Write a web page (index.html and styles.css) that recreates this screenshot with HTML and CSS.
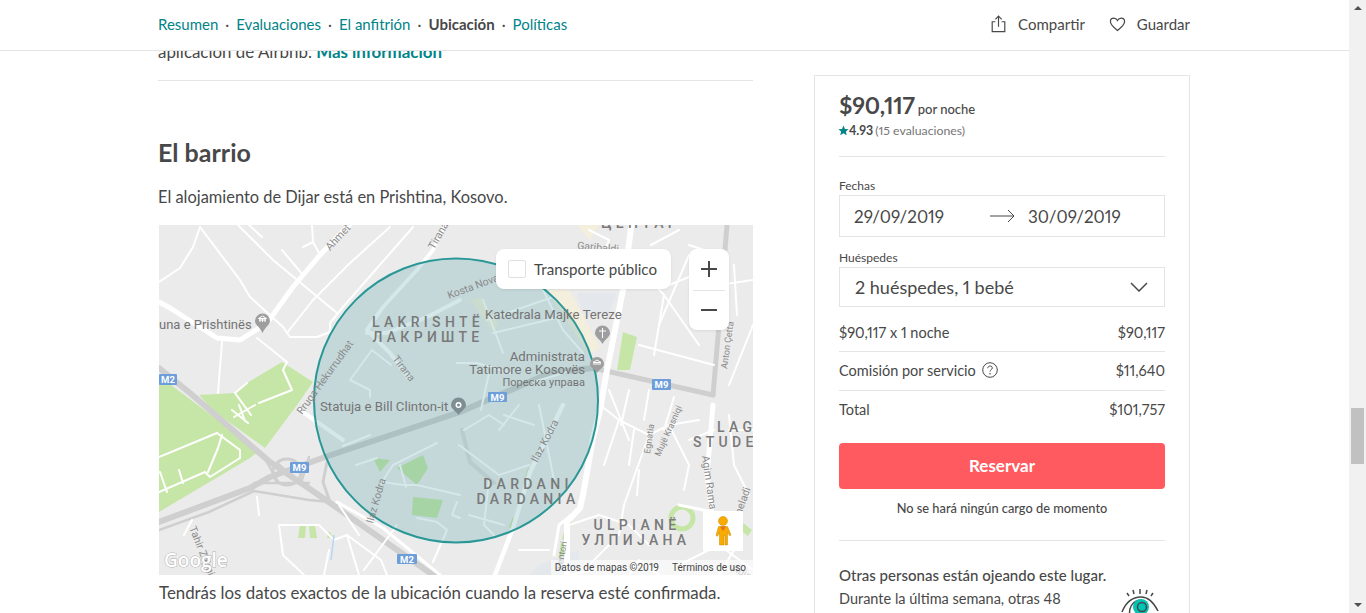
FILE: index.html
```html
<!DOCTYPE html>
<html lang="es">
<head>
    <meta charset="UTF-8">
    <meta name="viewport" content="width=device-width, initial-scale=1.0">
    <title>Alojamiento en Prishtina</title>
    <link rel="stylesheet" href="styles.css">
</head>
<body>
    <div class="window">
        <div class="page">
            <!-- Sticky section nav -->
            <header class="topnav">
                <nav class="section-links">
                    <a class="link" href="#">Resumen</a><span class="dot">·</span>
                    <a class="link" href="#">Evaluaciones</a><span class="dot">·</span>
                    <a class="link" href="#">El anfitrión</a><span class="dot">·</span>
                    <a class="link link-active" href="#">Ubicación</a><span class="dot">·</span>
                    <a class="link" href="#">Políticas</a>
                </nav>
                <div class="actions">
                    <span class="action">
                        <svg class="action-icon" viewBox="0 0 18 20"><path d="M5.500 7.500H2v11h14v-11h-3.500M9 13V1.500M5.500 4.800 9 1.300l3.500 3.500" fill="none" stroke="#484848" stroke-width="1.300"/></svg>
                        Compartir
                    </span>
                    <span class="action">
                        <svg class="action-icon" viewBox="0 0 18 18"><path d="M9 15.800C5 12.700 1.500 10 1.500 6.400c0-2.200 1.700-3.700 3.600-3.700 1.600 0 3 .9 3.900 2.600.9-1.700 2.300-2.600 3.900-2.600 1.900 0 3.600 1.500 3.600 3.700 0 3.600-3.500 6.300-7.500 9.400z" fill="none" stroke="#484848" stroke-width="1.300"/></svg>
                        Guardar
                    </span>
                </div>
            </header>

            <div class="columns">
                <main class="content">
                    <p class="clipped-text">aplicación de Airbnb. <a class="more" href="#">Más información</a></p>
                    <hr class="divider">
                    <h2 class="section-title">El barrio</h2>
                    <p class="body-text">El alojamiento de Dijar está en Prishtina, Kosovo.</p>

                    <div class="map">
                        <svg class="map-art" viewBox="0 0 594 350">
                            <rect width="594" height="350" fill="#ebebeb"/>
                            <!-- parks -->
                            <g fill="#c6e6a8">
                                <path d="M0 160 0 287 91 233 100 226 0 151z"/>
                                <path d="M40 170 76 168 88 158 123 137 154 157 138 180 106 223 56 187z"/>
                                <path d="M254 272 284 275 278 293 253 290z"/>
                                <path d="M238 243 264 230 269 243 258 260z"/>
                                <path d="M214 233 231 235 221 247z"/>
                                <path d="M464 107 478 112 471 145 458 145z"/>
                                <path d="M141 300 147 300 146 313 139 313zM150 300 156 300 158 313 151 313zM170 306 175 313 168 313z"/>
                                <path d="M409 291 415 291 406 316 403 314zM402 318 406 318 404 340 398 340z"/>
                                <path d="M584 298 593 305 589 311 580 304z"/>
                                <path d="M369 243 372 243 369 252 366 252zM354 292 358 294 353 304 350 302z"/>
                            </g>
                            <circle cx="523" cy="293" r="11" fill="none" stroke="#c6e6a8" stroke-width="5"/>
                            <path d="M388 65 410 65 441 122 430 130z" fill="#f4efdc"/>
                            <path d="M418 0 440 0 431 15z" fill="#f4efdc"/>
                            <path d="M311 75 322 72 340 100 334 107z" fill="#f4efdc"/>
                            <path d="M418 68 458 68 450 90 424 88z" fill="#e4e7ec"/>
                            <path d="M380 340 420 325 420 350 370 350z" fill="#e4e7ec"/>

                            <!-- highways -->
                            <g fill="none" stroke="#cfcfcf" stroke-linecap="round" stroke-linejoin="round">
                                <path d="M0 143 31 168 111 237 164 273 281 355" stroke-width="6"/>
                                <path d="M0 297 91 263 111 252 166 232 301 187 391 148 434 143" stroke-width="6"/>
                                <path d="M434 143 554 170" stroke-width="5"/>
                                <path d="M0 305 50 287 95 266 150 275 171 277" stroke-width="2.500"/>
                                <path d="M168 237 164 257 171 277" stroke-width="3"/>
                                <path d="M554 170 560 100 568 0" stroke-width="5"/>
                                <ellipse cx="128" cy="247" rx="14" ry="13" stroke-width="3"/>
                                <path d="M105 232 118 255M118 238 146 262M150 232 142 258M95 258 150 258" stroke-width="2.500"/>
                                <path class="ramp" d="M303 205 311 237 335 258" stroke-width="4"/>
                            </g>

                            <!-- main white roads -->
                            <g fill="none" stroke="#fff" stroke-linecap="round" stroke-linejoin="round">
                                <path d="M195 -5 161 30 134 62 108 98 81 115 58 113 11 83 0 77" stroke-width="5"/>
                                <path d="M288 -5 274 25 258 45 224 82 208 105 231 128 251 155" stroke-width="4"/>
                                <path d="M301 75 268 92 228 108 208 108" stroke-width="4"/>
                                <path d="M473 -5 464 65 448 145 441 185 434 213 424 270 421 283 408 297 408 355" stroke-width="6"/>
                                <path d="M404 180 371 247 354 303 334 355" stroke-width="4.500"/>
                                <path d="M421 283 400 300 395 330" stroke-width="3"/>
                                <path d="M554 180 548 250 553 287" stroke-width="5"/>
                                <path d="M554 287 520 280" stroke-width="3"/>
                                <path d="M141 185 184 215" stroke-width="4"/>
                                <path d="M178 277 224 303 281 350" stroke-width="3"/>
                            </g>

                            <!-- minor roads -->
                            <g fill="none" stroke="#fff" stroke-width="2" stroke-linecap="round" stroke-linejoin="round">
                                <path d="M41 2 81 55 91 72 124 102 131 112 158 112 171 107 171 98 184 82 254 2"/>
                                <path d="M41 2 34 22 21 43 0 57"/>
                                <path d="M79 0 114 35 178 88"/>
                                <path d="M90 0 103 12"/>
                                <path d="M153 0 154 17 161 30M144 22 154 17"/>
                                <path d="M123 25 144 50"/>
                                <path d="M231 2 191 38 154 75 128 108"/>
                                <path d="M98 113 128 137 124 145 133 165M133 165 100 178"/>
                                <path d="M63 117 59 168"/>
                                <path d="M76 168 92 190M88 158 76 168"/>
                                <path d="M0 232 58 208 81 225 81 233 51 252 46 247 0 267"/>
                                <path d="M63 210 59 223 49 247M1 247 8 267M20 245 24 258"/>
                                <path d="M73 185 89 198M80 180 86 196M75 192 96 180"/>
                                <path d="M25 310 33 295M100 290 98 272"/>
                                <path d="M160 300 120 300 124 330 145 350M160 300 175 315 188 310 200 350M200 310 180 280"/>
                                <path d="M188 310 222 335 228 350M170 325 165 350M238 300 205 345"/>
                                <path d="M191 155 213 125 232 140M191 155 211 165 211 172"/>
                                <path d="M184 221 211 210M197 240 218 233M221 260 234 240 278 218"/>
                                <path d="M224 257 244 260 258 260 301 270M241 240 247 262"/>
                                <path d="M258 293 278 297 288 305 274 337M298 277 293 290 301 293"/>
                                <path d="M324 75 344 128M384 65 404 105 424 128M328 95 394 72M334 108 401 92"/>
                                <path d="M298 138 318 138 351 148M374 157 408 147M330 148 322 185M345 190 375 200"/>
                                <path d="M305 205 330 190 345 200M300 220 340 250 370 240M310 290 345 300M330 255 325 300 335 310"/>
                                <path d="M380 180 385 205 395 255M360 180 340 205"/>
                                <path d="M441 180 460 195 490 210 510 200 540 195M460 195 445 240M470 240 475 205M490 210 465 280 460 310M480 245 478 270"/>
                                <path d="M510 200 530 240 525 265M530 215 555 205"/>
                                <path d="M410 300 440 290 470 300 490 320M430 340 450 320M470 350 480 335 500 350M360 325 390 325"/>
                                <path d="M570 190 575 240 590 270M570 205 594 205"/>
                                <path d="M470 30 505 70 495 130M510 60 560 40M505 70 540 120M480 120 555 140"/>
                                <path d="M492 20 520 5M530 20 560 30M530 30 500 100M560 60 594 55M575 40 578 90M594 100 570 160"/>
                                <path d="M450 165 470 215M470 165 462 200M490 165 485 195M515 172 505 205"/>
                                <path d="M430 5 450 15 440 40"/>
                                <path d="M460 340 410 350"/>
                                <path d="M520 340 560 320 594 345M575 325 560 350"/>
                            </g>
                            <path d="M175 310 172 335" stroke="#b5d6f5" stroke-width="1.500" fill="none"/>

                            <!-- accuracy circle -->
                            <circle cx="297" cy="175.500" r="142" fill="#2a8a96" fill-opacity=".2" stroke="#2a9797" stroke-width="2"/>

                            <!-- place labels -->
                            <g class="area-label">
                                <text x="269" y="102">LAKRISHTË</text>
                                <text x="269" y="117">ЛАКРИШТЕ</text>
                                <text x="369" y="264">DARDANI</text>
                                <text x="369" y="279">DARDANIA</text>
                                <text x="478" y="305">ULPIANË</text>
                                <text x="477" y="320">УЛПИЈАНА</text>
                                <text x="482" y="3">ЦЕНТАР</text>
                                <text class="start" x="558" y="207">LAG</text>
                                <text class="start" x="534" y="222">STUDE</text>
                            </g>
                            <g class="poi-label">
                                <text class="left-edge" x="0" y="104">una e Prishtinës</text>
                                <text x="326" y="94">Katedrala Majke Tereze</text>
                                <text class="end" x="426" y="136">Administrata</text>
                                <text class="end" x="426" y="149">Tatimore e Kosovës</text>
                                <text class="end small" x="426" y="161">Пореска управа</text>
                                <text x="161" y="186">Statuja e Bill Clinton-it</text>
                            </g>
                            <g class="road-label">
                                <text transform="translate(171 26) rotate(-47)">Ahmet</text>
                                <text transform="translate(275 25) rotate(-60)">Tirana</text>
                                <text transform="translate(143 190) rotate(-54)">Rruga Hekurrudhat</text>
                                <text transform="translate(233 134) rotate(52)">Tirana</text>
                                <text transform="translate(290 74) rotate(-20)">Kosta Nova</text>
                                <text transform="translate(378 238) rotate(-62)">Ilaz Kodra</text>
                                <text transform="translate(214 299) rotate(-74)">Ilaz Kodra</text>
                                <text transform="translate(30 303) rotate(68)">Tahir Zajmi</text>
                                <text transform="translate(543 231) rotate(82)">Agim Rama</text>
                                <text class="tiny" transform="translate(491 229) rotate(-82)">Egnatia</text>
                                <text class="tiny" transform="translate(501 232) rotate(-66)">Mujë Krasniqi</text>
                                <text class="tiny" transform="translate(568 144) rotate(-82)">Anton Çetta</text>
                                <text transform="translate(418 24) rotate(5)">Garibaldi</text>
                                <text class="tiny" transform="translate(403 345) rotate(-80)">Ventori</text>
                                <text transform="translate(580 296) rotate(-70)">Sheladi</text>
                                <text transform="translate(572 345) rotate(30)">Agim</text>
                            </g>

                            <!-- pins -->
                            <g fill="#9e9e9e">
                                <path d="M111 96a7.500 7.500 0 1 0-15 0c0 4 5 6 7.500 12 2.500-6 7.500-8 7.500-12z"/>
                                <path d="M451 108a7.500 7.500 0 1 0-15 0c0 4 5 6 7.500 11 2.500-5 7.500-7 7.500-11z"/>
                                <path d="M445 139a7 7 0 1 0-14 0c0 4 5 5 7 9 2-4 7-5 7-9z"/>
                                <path d="M307 180a7.500 7.500 0 1 0-15 0c0 4 5 6 7.500 10 2.500-4 7.500-6 7.500-10z" fill="#7e8e92"/>
                            </g>
                            <path d="M100 95h7M103.500 91l4 2.500h-8zM101 94v3M103.500 94v3M106 94v3M443.500 103v10M440 106h7M434 139h8M438 135l4 2.500h-8z" stroke="#fff" stroke-width="1" fill="none"/>
                            <circle cx="299.500" cy="180" r="3" fill="#fff"/>
                            <circle cx="299.500" cy="180" r="1.500" fill="#7e8e92"/>

                            <!-- route shields -->
                            <g fill="#6d9eda">
                                <rect x="0" y="149" width="18" height="11" rx="1"/>
                                <rect x="131" y="237" width="19" height="11" rx="1"/>
                                <rect x="329" y="167" width="19" height="10" rx="1"/>
                                <rect x="493" y="154" width="19" height="11" rx="1"/>
                                <rect x="238" y="329" width="20" height="10" rx="1"/>
                            </g>
                            <g class="shield-label">
                                <text x="9" y="158">M2</text>
                                <text x="140.500" y="246">M9</text>
                                <text x="338.500" y="175.500">M9</text>
                                <text x="502.500" y="163">M9</text>
                                <text x="248" y="338">M2</text>
                            </g>
                            <text class="google-mark" x="5" y="342">Google</text>
                        </svg>

                        <label class="transit-toggle">
                            <span class="checkbox"></span>
                            Transporte público
                        </label>
                        <div class="zoom-control">
                            <button class="zoom-btn">
                                <svg class="zoom-icon" viewBox="0 0 16 16"><path d="M8 0v16M0 8h16" stroke="#484848" stroke-width="2"/></svg>
                            </button>
                            <button class="zoom-btn zoom-out">
                                <svg class="zoom-icon" viewBox="0 0 16 16"><path d="M0 8h16" stroke="#484848" stroke-width="2"/></svg>
                            </button>
                        </div>
                        <div class="pegman">
                            <svg class="pegman-icon" viewBox="0 0 18 30">
                                <circle cx="9" cy="5" r="4.500" fill="#f9ab00" stroke="#c98a00" stroke-width=".5"/>
                                <path d="M4.500 10.500h9l3.500 8.500-1.500.8-2-3.800V29h-2.500v-9.500h-1V29H5.500V16.500l-2 3.800L2 19.500z" fill="#f9ab00" stroke="#c98a00" stroke-width=".5"/>
                                <path d="M6 10.500h6L9 15z" fill="#e2711d"/>
                            </svg>
                        </div>
                        <div class="map-credits">
                            <span>Datos de mapas ©2019</span>
                            <span>Términos de uso</span>
                        </div>
                    </div>
                    <p class="map-note">Tendrás los datos exactos de la ubicación cuando la reserva esté confirmada.</p>
                </main>

                <!-- Booking card -->
                <aside class="booking">
                    <div class="price-line">
                        <span class="price">$90,117</span>
                        <span class="per-night">por noche</span>
                    </div>
                    <div class="rating">
                        <svg class="star" viewBox="0 0 12 12"><path d="M6 .6 7.600 4.300l4 .3-3 2.600.9 3.900L6 9.100l-3.500 2 .9-3.900-3-2.600 4-.3z" fill="#008489"/></svg>
                        <span class="score">4.93</span>
                        <span class="reviews">(15 evaluaciones)</span>
                    </div>
                    <hr class="divider card-top-rule">

                    <div class="field-label">Fechas</div>
                    <div class="field dates">
                        <span class="date-from">29/09/2019</span>
                        <svg class="arrow" viewBox="0 0 25 14"><path d="M0 7h24M18 1l6 6-6 6" fill="none" stroke="#484848" stroke-width="1"/></svg>
                        <span>30/09/2019</span>
                    </div>

                    <div class="field-label guests-label">Huéspedes</div>
                    <div class="field guests">
                        <span>2 huéspedes, 1 bebé</span>
                        <svg class="chevron" viewBox="0 0 18 10"><path d="M1 1l8 8 8-8" fill="none" stroke="#484848" stroke-width="1.500"/></svg>
                    </div>

                    <div class="fee-row">
                        <span>$90,117 x 1 noche</span>
                        <span>$90,117</span>
                    </div>
                    <div class="fee-row">
                        <span class="fee-name">Comisión por servicio
                            <svg class="help" viewBox="0 0 16 16"><circle cx="8" cy="8" r="7.300" fill="none" stroke="#484848"/><path d="M5.800 6.200C5.900 4.800 6.900 4 8.100 4c1.300 0 2.200.8 2.200 2 0 1.600-2.300 1.700-2.300 3.500" fill="none" stroke="#484848"/><circle cx="8" cy="11.700" r=".8" fill="#484848"/></svg>
                        </span>
                        <span>$11,640</span>
                    </div>
                    <div class="fee-row fee-total">
                        <span>Total</span>
                        <span>$101,757</span>
                    </div>

                    <button class="reserve">Reservar</button>
                    <p class="no-charge">No se hará ningún cargo de momento</p>
                    <hr class="divider">

                    <div class="notice">
                        <div class="notice-text">
                            <div class="notice-title">Otras personas están ojeando este lugar.</div>
                            <div class="notice-body">Durante la última semana, otras 48 personas han consultado este</div>
                        </div>
                        <svg class="eye" viewBox="0 0 40 40">
                            <path d="M7 6l2 3M13 3l1 4M20 2v5M27 3l-1 4M33 6l-2 3" stroke="#484848" stroke-width="1.500" fill="none"/>
                            <path d="M2 25C6 15 13 10 21 10c7 0 12 4 17 14" stroke="#484848" stroke-width="1.500" fill="none"/>
                            <path d="M11 32C7 22 12 13 22 13" stroke="#484848" stroke-width="1.500" fill="none"/>
                            <circle cx="21" cy="20" r="8" fill="#00c4b4"/>
                            <circle cx="22" cy="20" r="4.500" fill="none" stroke="#484848" stroke-width="1.500"/>
                        </svg>
                    </div>
                </aside>
            </div>
        </div>

        <div class="scrollbar">
            <svg class="scroll-arrow" viewBox="0 0 8 4"><path d="M4 0l4 4H0z" fill="#505050"/></svg>
            <div class="scroll-thumb"></div>
            <svg class="scroll-arrow scroll-arrow-down" viewBox="0 0 8 4"><path d="M0 0h8L4 4z" fill="#505050"/></svg>
        </div>
    </div>
</body>
</html>
```

FILE: styles.css
```css
html, body {
    margin: 0;
    height: 100%;
    overflow: hidden;
}
body {
    font-family: "Lato", "Liberation Sans", sans-serif;
    font-variant-numeric: proportional-nums;
    color: #484848;
    background-color: #fff;
}
.window {
    display: flex;
    height: 613px;
}
.page {
    flex: 1;
    min-width: 0;
    overflow: hidden;
}

/* top nav */
.topnav {
    position: relative;
    z-index: 2;
    display: flex;
    justify-content: space-between;
    align-items: center;
    box-sizing: border-box;
    height: 51px;
    padding: 0 159px 2px 158px;
    background-color: #fff;
    border-bottom: 1px solid #e4e4e4;
}
.section-links {
    display: flex;
    align-items: center;
    font-size: 15px;
}
.link {
    color: #008489;
    text-decoration: none;
}
.link-active {
    color: #484848;
    font-weight: 700;
}
.dot {
    margin: 0 7px;
    color: #484848;
}
.actions {
    display: flex;
    gap: 24px;
    font-size: 15px;
}
.action {
    display: flex;
    align-items: center;
    gap: 11px;
}
.action-icon {
    width: 17px;
    height: 18px;
}

/* two columns */
.columns {
    display: flex;
    gap: 61px;
    padding-left: 158px;
}
.content {
    width: 595px;
    margin-top: -11px;
}
.clipped-text {
    margin: 0;
    font-size: 16.900px;
    line-height: 24px;
}
.more {
    color: #008489;
    font-weight: 700;
    text-decoration: none;
}
.divider {
    margin: 0;
    border: none;
    border-top: 1px solid #e4e4e4;
}
.content .divider {
    margin-top: 16px;
}
.section-title {
    margin: 54px 0 0;
    font-size: 25px;
    line-height: 34px;
    font-weight: 700;
}
.body-text {
    margin: 16px 0 0;
    font-size: 16.400px;
    line-height: 24px;
}

/* map */
.map {
    position: relative;
    width: 594px;
    height: 350px;
    margin: 16px 0 0 1px;
    overflow: hidden;
}
.map-art {
    display: block;
    width: 594px;
    height: 350px;
    font-family: "Roboto", sans-serif;
}
.ramp {
    stroke: #dcdcdc;
}
.area-label text {
    font-size: 14px;
    font-weight: 500;
    letter-spacing: 4.300px;
    fill: #797979;
    text-anchor: middle;
}
.area-label .start {
    text-anchor: start;
}
.poi-label text {
    font-size: 13.200px;
    fill: #747474;
}
.poi-label .left-edge {
    font-size: 13px;
}
.poi-label .end {
    text-anchor: end;
}
.poi-label .small {
    font-size: 11px;
}
.road-label text {
    font-size: 10.500px;
    fill: #8a8a8a;
}
.road-label .tiny {
    font-size: 9px;
}
.shield-label text {
    font-size: 9.500px;
    font-weight: 700;
    fill: #fff;
    text-anchor: middle;
}
.google-mark {
    font-family: "Open Sans", sans-serif;
    font-size: 19px;
    font-weight: 600;
    fill: #fff;
    stroke: #b0b0b0;
    stroke-width: 1px;
    paint-order: stroke;
}
.transit-toggle {
    position: absolute;
    top: 24px;
    left: 337px;
    display: flex;
    align-items: center;
    gap: 8px;
    box-sizing: border-box;
    width: 175px;
    height: 40px;
    padding: 0 0 1px 12px;
    font-size: 15.100px;
    background-color: #fff;
    border-radius: 8px;
    box-shadow: 0 1px 3px rgba(0, 0, 0, 0.08);
}
.checkbox {
    box-sizing: border-box;
    width: 18px;
    height: 18px;
    border: 1px solid #e0e0e0;
    border-radius: 2px;
}
.zoom-control {
    position: absolute;
    top: 24px;
    left: 530px;
    display: flex;
    flex-direction: column;
    width: 40px;
    height: 81px;
    background-color: #fff;
    border-radius: 8px;
    box-shadow: 0 1px 3px rgba(0, 0, 0, 0.08);
}
.zoom-btn {
    flex: 1;
    display: flex;
    align-items: center;
    justify-content: center;
    padding: 0;
    border: none;
    background: none;
}
.zoom-out {
    position: relative;
}
.zoom-out::before {
    content: "";
    position: absolute;
    top: 0;
    left: 4px;
    right: 4px;
    border-top: 1px solid #e4e4e4;
}
.zoom-icon {
    width: 16px;
    height: 16px;
}
.pegman {
    position: absolute;
    top: 286px;
    left: 544px;
    display: flex;
    align-items: center;
    justify-content: center;
    width: 40px;
    height: 40px;
    background-color: #fff;
}
.pegman-icon {
    width: 18px;
    height: 30px;
}
.map-credits {
    position: absolute;
    right: 0;
    bottom: 0;
    display: flex;
    gap: 13px;
    height: 15px;
    padding: 0 7px 0 4px;
    font-family: "Roboto", sans-serif;
    font-size: 10px;
    line-height: 15px;
    color: #444;
    background-color: rgba(255, 255, 255, 0.6);
}
.map-note {
    margin: 6px 0 0 1px;
    font-size: 16.850px;
    line-height: 24px;
}

/* booking card */
.booking {
    box-sizing: border-box;
    width: 376px;
    height: 640px;
    margin-top: 24px;
    padding: 13px 24px 0;
    border: 1px solid #e4e4e4;
}
.price-line {
    display: flex;
    align-items: baseline;
    gap: 3px;
}
.price {
    font-size: 23px;
    line-height: 32px;
    font-weight: 700;
    letter-spacing: -.2px;
}
.per-night {
    font-size: 13px;
    font-weight: 500;
}
.rating {
    display: flex;
    align-items: center;
    margin-top: 1px;
    font-size: 12.300px;
    line-height: 18px;
}
.star {
    width: 11px;
    height: 11px;
    margin: 0 0 1px -1px;
}
.score {
    font-weight: 700;
    margin-right: 2px;
}
.reviews {
    color: #767676;
}
.card-top-rule {
    margin-top: 16px;
}
.field-label {
    margin-top: 21px;
    font-size: 12px;
    line-height: 16px;
}
.guests-label {
    margin-top: 13px;
}
.field {
    display: flex;
    align-items: center;
    box-sizing: border-box;
    margin-top: 1px;
    font-size: 18px;
    border: 1px solid #e4e4e4;
}
.dates {
    height: 42px;
    padding-left: 14px;
    font-size: 17px;
}
.date-from {
    width: 136px;
}
.arrow {
    width: 25px;
    height: 14px;
    margin-right: 13px;
}
.guests {
    justify-content: space-between;
    height: 40px;
    padding: 0 16px 0 15px;
}
.chevron {
    width: 18px;
    height: 10px;
}
.fee-row {
    display: flex;
    justify-content: space-between;
    align-items: center;
    height: 36px;
    padding-bottom: 2px;
    font-size: 14.500px;
    border-bottom: 1px solid #e4e4e4;
}
.guests + .fee-row {
    height: 37px;
    padding-bottom: 0;
    margin-top: 7px;
}
.fee-name {
    display: flex;
    align-items: center;
    gap: 6px;
}
.help {
    width: 16px;
    height: 16px;
}
.fee-total {
    border-bottom: none;
}
.reserve {
    display: block;
    width: 100%;
    height: 46px;
    margin-top: 14px;
    padding: 0 0 2px;
    font-family: inherit;
    font-size: 17px;
    font-weight: 700;
    color: #fff;
    background-color: #ff5a5f;
    border: none;
    border-radius: 4px;
}
.no-charge {
    margin: 11px 0 24px;
    font-size: 12.800px;
    line-height: 16px;
    font-weight: 500;
    text-align: center;
}
.notice {
    display: flex;
    justify-content: space-between;
    margin-top: 25px;
    padding-right: 5px;
}
.notice-text {
    width: 275px;
}
.notice-title {
    font-size: 15px;
    font-weight: 500;
    line-height: 18px;
    white-space: nowrap;
}
.notice-body {
    margin-top: 5px;
    width: 240px;
    font-size: 14.500px;
    line-height: 20px;
}
.eye {
    width: 40px;
    height: 40px;
    margin-top: 21px;
}

/* scrollbar */
.scrollbar {
    position: relative;
    box-sizing: border-box;
    display: flex;
    flex-direction: column;
    align-items: center;
    width: 17px;
    background-color: #f1f1f1;
}
.scroll-arrow {
    width: 8px;
    height: 4px;
    margin-top: 6px;
}
.scroll-thumb {
    width: 13px;
    height: 56px;
    margin-top: 398px;
    background-color: #c1c1c1;
}
.scroll-arrow-down {
    margin-top: auto;
    margin-bottom: 6px;
}
```
